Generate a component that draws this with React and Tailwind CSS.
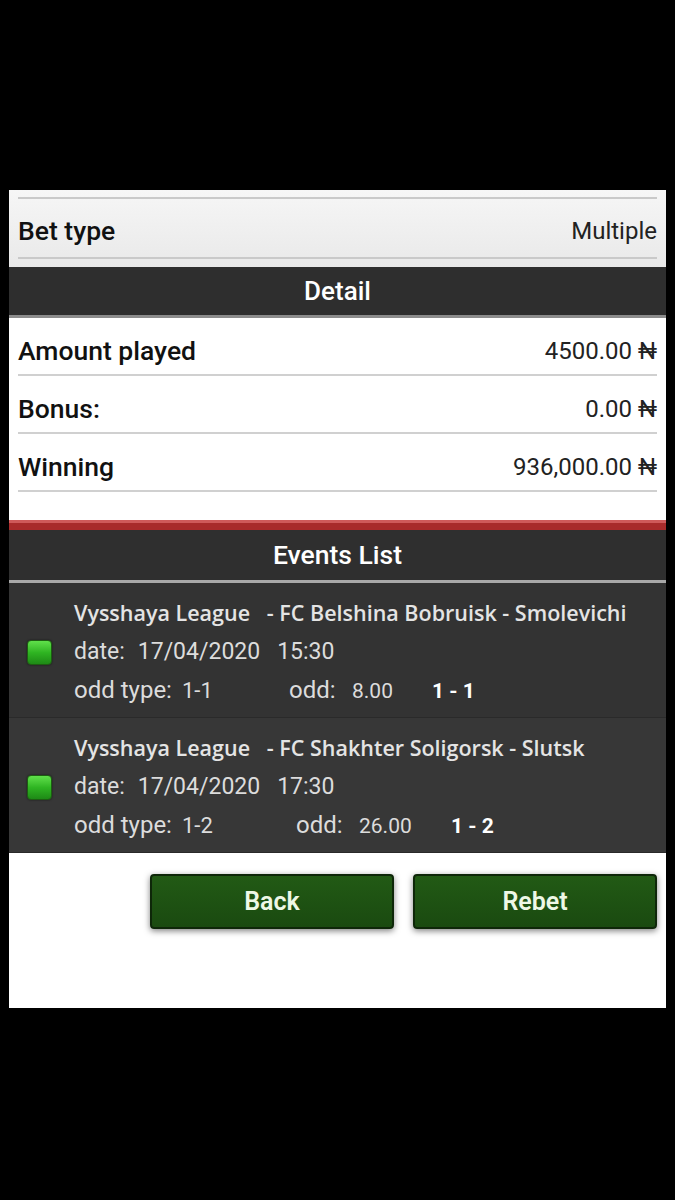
import React from "react";

const events = [
  {
    title: "Vysshaya League   - FC Belshina Bobruisk - Smolevichi",
    date: "17/04/2020",
    time: "15:30",
    oddType: "1-1",
    odd: "8.00",
    score: "1 - 1",
    oddGap: "w-[215px]",
    oddW: "w-[80px]",
    bg: "bg-[#333333]",
  },
  {
    title: "Vysshaya League   - FC Shakhter Soligorsk - Slutsk",
    date: "17/04/2020",
    time: "17:30",
    oddType: "1-2",
    odd: "26.00",
    score: "1 - 2",
    oddGap: "w-[222px]",
    oddW: "w-[92px]",
    bg: "bg-[#373737]",
  },
];

const rows = [
  { label: "Amount played", value: "4500.00 ₦" },
  { label: "Bonus:", value: "0.00 ₦" },
  { label: "Winning", value: "936,000.00 ₦" },
];

function EventRow({ ev }) {
  return (
    <div className={`flex h-[135px] items-center ${ev.bg} border-b border-[#2a2a2a] pt-[4px]`}>
      <div className="ml-[18px] mr-[22px] h-[25px] w-[25px] shrink-0 rounded-[4px] border border-[#1d5e12] bg-gradient-to-b from-[#5fe04a] via-[#2fb522] to-[#1e8a16] shadow-[0_0_2px_rgba(0,0,0,0.6)]" />
      <div className="flex flex-col text-[#e4e4e4]">
        <div className="whitespace-pre font-['Open_Sans',sans-serif] text-[21.5px] font-semibold leading-[26px]">
          {ev.title}
        </div>
        <div className="mt-[12px] flex font-['Roboto',sans-serif] text-[23px] leading-[28px] text-[#dcdcdc]">
          <span className="mr-[13px]">date:</span>
          <span className="mr-[17px]">{ev.date}</span>
          <span>{ev.time}</span>
        </div>
        <div className="mt-[10px] flex items-baseline font-['Roboto',sans-serif] text-[24px] leading-[28px] text-[#dcdcdc]">
          <span className={ev.oddGap}>
            odd type:<span className="ml-[10px] text-[22px]">{ev.oddType}</span>
          </span>
          <span className="w-[63px]">odd:</span>
          <span className={`${ev.oddW} text-[21px]`}>{ev.odd}</span>
          <span className="text-[21px] font-bold text-white">{ev.score}</span>
        </div>
      </div>
    </div>
  );
}

export default function App() {
  return (
    <div className="h-[1200px] w-[675px] bg-black pt-[190px] font-['Roboto',sans-serif]">
      <div className="ml-[9px] flex h-[818px] w-[657px] flex-col bg-white">
        {/* Bet type */}
        <div className="h-[77px] bg-gradient-to-b from-[#f6f6f6] to-[#e9e9e9] px-[9px] pt-[7px]">
          <div className="h-[2px] bg-[#c9c9c9]" />
          <div className="flex h-[58px] items-center justify-between pt-[6px]">
            <span className="text-[26.5px] font-medium text-[#111]">Bet type</span>
            <span className="text-[24px] text-[#222]">Multiple</span>
          </div>
          <div className="h-[2px] bg-[#c9c9c9]" />
        </div>

        {/* Detail header */}
        <div className="flex h-[48px] items-center justify-center bg-[#2e2e2e]">
          <span className="text-[26px] font-medium text-white">Detail</span>
        </div>
        <div className="h-[3px] bg-[#8c8c8c]" />

        {/* Detail rows */}
        <div className="px-[9px]">
          {rows.map((r) => (
            <div key={r.label} className="flex h-[58px] items-end border-b-2 border-[#d0d0d0] pb-[3px]">
              <div className="flex w-full items-center justify-between">
                <span className="text-[26.5px] font-medium text-[#111]">{r.label}</span>
                <span className="text-[24px] text-[#222]">{r.value}</span>
              </div>
            </div>
          ))}
        </div>
        <div className="h-[28px]" />

        {/* Events list header */}
        <div className="h-[3px] bg-[#cf5a5a]" />
        <div className="h-[7px] bg-[#a82b2b]" />
        <div className="flex h-[50px] items-center justify-center bg-[#2f2f2f]">
          <span className="text-[26.5px] font-medium text-white">Events List</span>
        </div>
        <div className="h-[3px] bg-[#a9a9a9]" />

        {events.map((ev) => (
          <EventRow key={ev.title} ev={ev} />
        ))}

        {/* Buttons */}
        <div className="flex justify-end gap-[19px] pr-[9px] pt-[21px]">
          <button className="h-[55px] w-[244px] rounded-[4px] border-2 border-[#0e2709] bg-gradient-to-b from-[#225a15] to-[#1a4a10] text-[25px] font-semibold text-[#eef8e6] shadow-[0_2px_6px_rgba(0,0,0,0.5)]">
            Back
          </button>
          <button className="h-[55px] w-[244px] rounded-[4px] border-2 border-[#0e2709] bg-gradient-to-b from-[#225a15] to-[#1a4a10] text-[25px] font-semibold text-[#eef8e6] shadow-[0_2px_6px_rgba(0,0,0,0.5)]">
            Rebet
          </button>
        </div>
      </div>
    </div>
  );
}
